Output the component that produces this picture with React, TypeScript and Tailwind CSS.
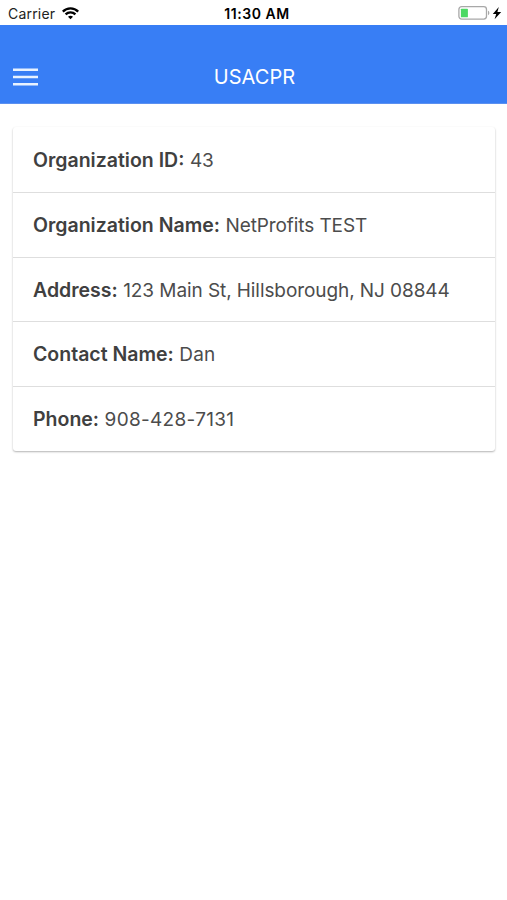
import React from 'react';

interface Detail {
  label: string;
  value: string;
  valueClass: string;
}

const details: Detail[] = [
  { label: 'Organization ID:', value: '43', valueClass: 'tracking-[-0.1px]' },
  { label: 'Organization Name:', value: 'NetProfits TEST', valueClass: 'tracking-[-0.1px]' },
  { label: 'Address:', value: '123 Main St, Hillsborough, NJ 08844', valueClass: 'tracking-[-0.08px]' },
  { label: 'Contact Name:', value: 'Dan', valueClass: 'tracking-[0.1px]' },
  { label: 'Phone:', value: '908-428-7131', valueClass: 'tracking-[0.3px]' },
];

const WifiIcon: React.FC = () => (
  <svg width="17" height="13" viewBox="0 0 17 13" fill="none" stroke="#000" strokeWidth="2.3">
    <path d="M0.8 4.6C5 0.3 12 0.3 16.2 4.6" />
    <path d="M3.6 7.4C6.3 4.6 10.7 4.6 13.4 7.4" />
    <path d="M8.5 12.2L6 9.7C7.4 8.4 9.6 8.4 11 9.7Z" fill="#000" stroke="none" />
  </svg>
);

const BatteryIcon: React.FC = () => (
  <svg width="44" height="16" viewBox="0 0 44 16" fill="none">
    <rect x="0.9" y="1.7" width="27.6" height="12.4" rx="2.8" stroke="#a8a8a8" strokeWidth="1.3" />
    <rect x="2.9" y="3.7" width="7" height="8.6" rx="0.6" fill="#4cd964" />
    <path d="M30 5.8C31.8 6.3 31.8 9.7 30 10.2Z" fill="#a8a8a8" />
    <path d="M40.8 2L34.8 9H38.2L36.6 14.2L43.2 6.9H39.4Z" fill="#000" />
  </svg>
);

const MenuIcon: React.FC = () => (
  <svg width="25" height="18" viewBox="0 0 25 18" fill="none" stroke="#e8f2ff" strokeWidth="2.5">
    <path d="M0 1.7H25M0 8.9H25M0 16.2H25" />
  </svg>
);

const StatusBar: React.FC = () => (
  <div className="grid h-[25px] grid-cols-[1fr_auto_1fr] items-center pl-[8px] pr-[5px] text-[14px] text-[#222]">
    <div className="flex items-center gap-[7px] pt-[2px]">
      <span className="tracking-[0.2px]">Carrier</span>
      <WifiIcon />
    </div>
    <span className="pl-[4px] pt-[2px] text-center font-semibold tracking-[0.55px] text-black">11:30 AM</span>
    <div className="flex justify-end pt-px">
      <BatteryIcon />
    </div>
  </div>
);

const Header: React.FC = () => (
  <header className="grid h-[79px] grid-cols-[1fr_auto_1fr] items-end border-b border-[#5b90f0] bg-[#387ef5] px-[13px] pb-[11px] text-white">
    <button className="w-[25px] pb-[6px]" aria-label="Menu">
      <MenuIcon />
    </button>
    <h1 className="pl-[2px] text-[20px] leading-[30px] tracking-[0.1px]">USACPR</h1>
  </header>
);

const App: React.FC = () => (
  <div className="min-h-screen bg-white font-['Inter',sans-serif]">
    <StatusBar />
    <Header />
    <main className="pl-[13px] pr-[12px] pt-[23px]">
      <div className="overflow-hidden rounded-[3px] bg-white pt-px shadow-[0_1px_2px_0_rgba(0,0,0,0.3)]">
        {details.map((item) => (
          <div
            key={item.label}
            className="flex h-[64.75px] items-baseline gap-[5.5px] whitespace-nowrap border-b border-[#dedede] pl-5 pt-[17px] text-[19px] leading-[30px] text-[#4c4c4c] last:h-[64px] last:border-b-0"
          >
            <strong className="text-[19.5px] font-semibold text-[#404040]">{item.label}</strong>
            <span className={item.valueClass}>{item.value}</span>
          </div>
        ))}
      </div>
    </main>
  </div>
);

export default App;
